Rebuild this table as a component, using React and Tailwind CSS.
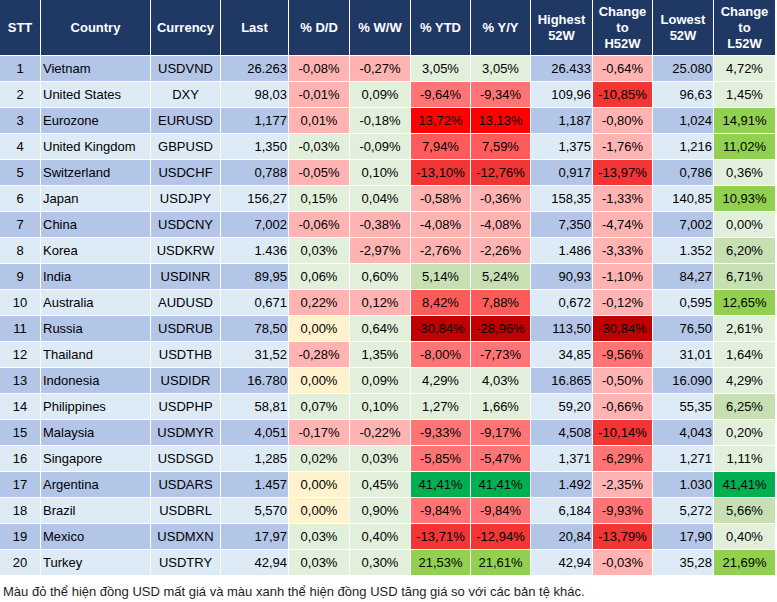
const heat = {
  p: 'bg-[#ffb3b3]',
  g: 'bg-[#e2efda]',
  y: 'bg-[#fff2cc]',
  G: 'bg-[#c6e0b4]',
  r: 'bg-[#ff7575]',
  R: 'bg-[#ff5b5b]',
  d: 'bg-[#f23535]',
  F: 'bg-[#ff0000]',
  D: 'bg-[#c00000]',
  L: 'bg-[#92d050]',
  E: 'bg-[#00b050]',
};

// [stt, country, currency, last, dd, ww, ytd, yy, high, h52, low, l52]
const rows = [
  [1, 'Vietnam', 'USDVND', '26.263', ['-0,08%', 'p'], ['-0,27%', 'p'], ['3,05%', 'g'], ['3,05%', 'g'], '26.433', ['-0,64%', 'p'], '25.080', ['4,72%', 'g']],
  [2, 'United States', 'DXY', '98,03', ['-0,01%', 'p'], ['0,09%', 'g'], ['-9,64%', 'r'], ['-9,34%', 'r'], '109,96', ['-10,85%', 'd'], '96,63', ['1,45%', 'g']],
  [3, 'Eurozone', 'EURUSD', '1,177', ['0,01%', 'p'], ['-0,18%', 'g'], ['13,72%', 'F'], ['13,13%', 'F'], '1,187', ['-0,80%', 'p'], '1,024', ['14,91%', 'L']],
  [4, 'United Kingdom', 'GBPUSD', '1,350', ['-0,03%', 'g'], ['-0,09%', 'g'], ['7,94%', 'R'], ['7,59%', 'R'], '1,375', ['-1,76%', 'p'], '1,216', ['11,02%', 'L']],
  [5, 'Switzerland', 'USDCHF', '0,788', ['-0,05%', 'p'], ['0,10%', 'g'], ['-13,10%', 'd'], ['-12,76%', 'd'], '0,917', ['-13,97%', 'd'], '0,786', ['0,36%', 'g']],
  [6, 'Japan', 'USDJPY', '156,27', ['0,15%', 'g'], ['0,04%', 'g'], ['-0,58%', 'p'], ['-0,36%', 'p'], '158,35', ['-1,33%', 'p'], '140,85', ['10,93%', 'L']],
  [7, 'China', 'USDCNY', '7,002', ['-0,06%', 'p'], ['-0,38%', 'p'], ['-4,08%', 'p'], ['-4,08%', 'p'], '7,350', ['-4,74%', 'p'], '7,002', ['0,00%', 'g']],
  [8, 'Korea', 'USDKRW', '1.436', ['0,03%', 'g'], ['-2,97%', 'p'], ['-2,76%', 'p'], ['-2,26%', 'p'], '1.486', ['-3,33%', 'p'], '1.352', ['6,20%', 'G']],
  [9, 'India', 'USDINR', '89,95', ['0,06%', 'g'], ['0,60%', 'g'], ['5,14%', 'G'], ['5,24%', 'G'], '90,93', ['-1,10%', 'p'], '84,27', ['6,71%', 'G']],
  [10, 'Australia', 'AUDUSD', '0,671', ['0,22%', 'p'], ['0,12%', 'p'], ['8,42%', 'R'], ['7,88%', 'R'], '0,672', ['-0,12%', 'p'], '0,595', ['12,65%', 'L']],
  [11, 'Russia', 'USDRUB', '78,50', ['0,00%', 'y'], ['0,64%', 'g'], ['-30,84%', 'D'], ['-28,96%', 'D'], '113,50', ['-30,84%', 'D'], '76,50', ['2,61%', 'g']],
  [12, 'Thailand', 'USDTHB', '31,52', ['-0,28%', 'p'], ['1,35%', 'g'], ['-8,00%', 'r'], ['-7,73%', 'r'], '34,85', ['-9,56%', 'r'], '31,01', ['1,64%', 'g']],
  [13, 'Indonesia', 'USDIDR', '16.780', ['0,00%', 'y'], ['0,09%', 'g'], ['4,29%', 'g'], ['4,03%', 'g'], '16.865', ['-0,50%', 'p'], '16.090', ['4,29%', 'g']],
  [14, 'Philippines', 'USDPHP', '58,81', ['0,07%', 'g'], ['0,10%', 'g'], ['1,27%', 'g'], ['1,66%', 'g'], '59,20', ['-0,66%', 'p'], '55,35', ['6,25%', 'G']],
  [15, 'Malaysia', 'USDMYR', '4,051', ['-0,17%', 'p'], ['-0,22%', 'p'], ['-9,33%', 'r'], ['-9,17%', 'r'], '4,508', ['-10,14%', 'd'], '4,043', ['0,20%', 'g']],
  [16, 'Singapore', 'USDSGD', '1,285', ['0,02%', 'g'], ['0,03%', 'g'], ['-5,85%', 'r'], ['-5,47%', 'r'], '1,371', ['-6,29%', 'r'], '1,271', ['1,11%', 'g']],
  [17, 'Argentina', 'USDARS', '1.457', ['0,00%', 'y'], ['0,45%', 'g'], ['41,41%', 'E'], ['41,41%', 'E'], '1.492', ['-2,35%', 'p'], '1.030', ['41,41%', 'E']],
  [18, 'Brazil', 'USDBRL', '5,570', ['0,00%', 'y'], ['0,90%', 'g'], ['-9,84%', 'r'], ['-9,84%', 'r'], '6,184', ['-9,93%', 'r'], '5,272', ['5,66%', 'G']],
  [19, 'Mexico', 'USDMXN', '17,97', ['0,03%', 'g'], ['0,40%', 'g'], ['-13,71%', 'd'], ['-12,94%', 'd'], '20,84', ['-13,79%', 'd'], '17,90', ['0,40%', 'g']],
  [20, 'Turkey', 'USDTRY', '42,94', ['0,03%', 'g'], ['0,30%', 'g'], ['21,53%', 'L'], ['21,61%', 'L'], '42,94', ['-0,03%', 'p'], '35,28', ['21,69%', 'L']],
];

const headers = [
  ['STT'],
  ['Country'],
  ['Currency'],
  ['Last'],
  ['% D/D'],
  ['% W/W'],
  ['% YTD'],
  ['% Y/Y'],
  ['Highest', '52W'],
  ['Change', 'to', 'H52W'],
  ['Lowest', '52W'],
  ['Change', 'to', 'L52W'],
];

function Heat({ cell }) {
  return <div className={`${heat[cell[1]]} flex items-center justify-center`}>{cell[0]}</div>;
}

export default function App() {
  return (
    <div className="w-[777px] bg-white font-['Liberation_Sans',Arial,sans-serif] text-[13px] text-black">
      <div className="grid w-[776px] grid-cols-[40px_109px_69px_67px_60px_60px_59px_59px_61px_59px_60px_61px] grid-rows-[55px] auto-rows-[25px] gap-px bg-white">
        {headers.map((h, i) => (
          <div key={i} className="flex flex-col items-center justify-center bg-[#203864] text-center font-bold leading-[16px] text-white">
            {h.map((line) => (
              <span key={line}>{line}</span>
            ))}
          </div>
        ))}

        {rows.map((r) => {
          const base = r[0] % 2 === 1 ? 'bg-[#b4c6e7]' : 'bg-[#ddebf7]';
          return [
            <div key={`${r[0]}a`} className={`${base} flex items-center justify-center`}>{r[0]}</div>,
            <div key={`${r[0]}b`} className={`${base} flex items-center pl-[2px]`}>{r[1]}</div>,
            <div key={`${r[0]}c`} className={`${base} flex items-center justify-center`}>{r[2]}</div>,
            <div key={`${r[0]}d`} className={`${base} flex items-center justify-end pr-px`}>{r[3]}</div>,
            <Heat key={`${r[0]}e`} cell={r[4]} />,
            <Heat key={`${r[0]}f`} cell={r[5]} />,
            <Heat key={`${r[0]}g`} cell={r[6]} />,
            <Heat key={`${r[0]}h`} cell={r[7]} />,
            <div key={`${r[0]}i`} className={`${base} flex items-center justify-end pr-px`}>{r[8]}</div>,
            <Heat key={`${r[0]}j`} cell={r[9]} />,
            <div key={`${r[0]}k`} className={`${base} flex items-center justify-end pr-px`}>{r[10]}</div>,
            <Heat key={`${r[0]}l`} cell={r[11]} />,
          ];
        })}
      </div>

      <p className="mt-[9px] pl-[3px] text-[13px] leading-[16px] text-[#1e1e1e]">
        Màu đỏ thể hiện đồng USD mất giá và màu xanh thể hiện đồng USD tăng giá so với các bản tệ khác.
      </p>
    </div>
  );
}
